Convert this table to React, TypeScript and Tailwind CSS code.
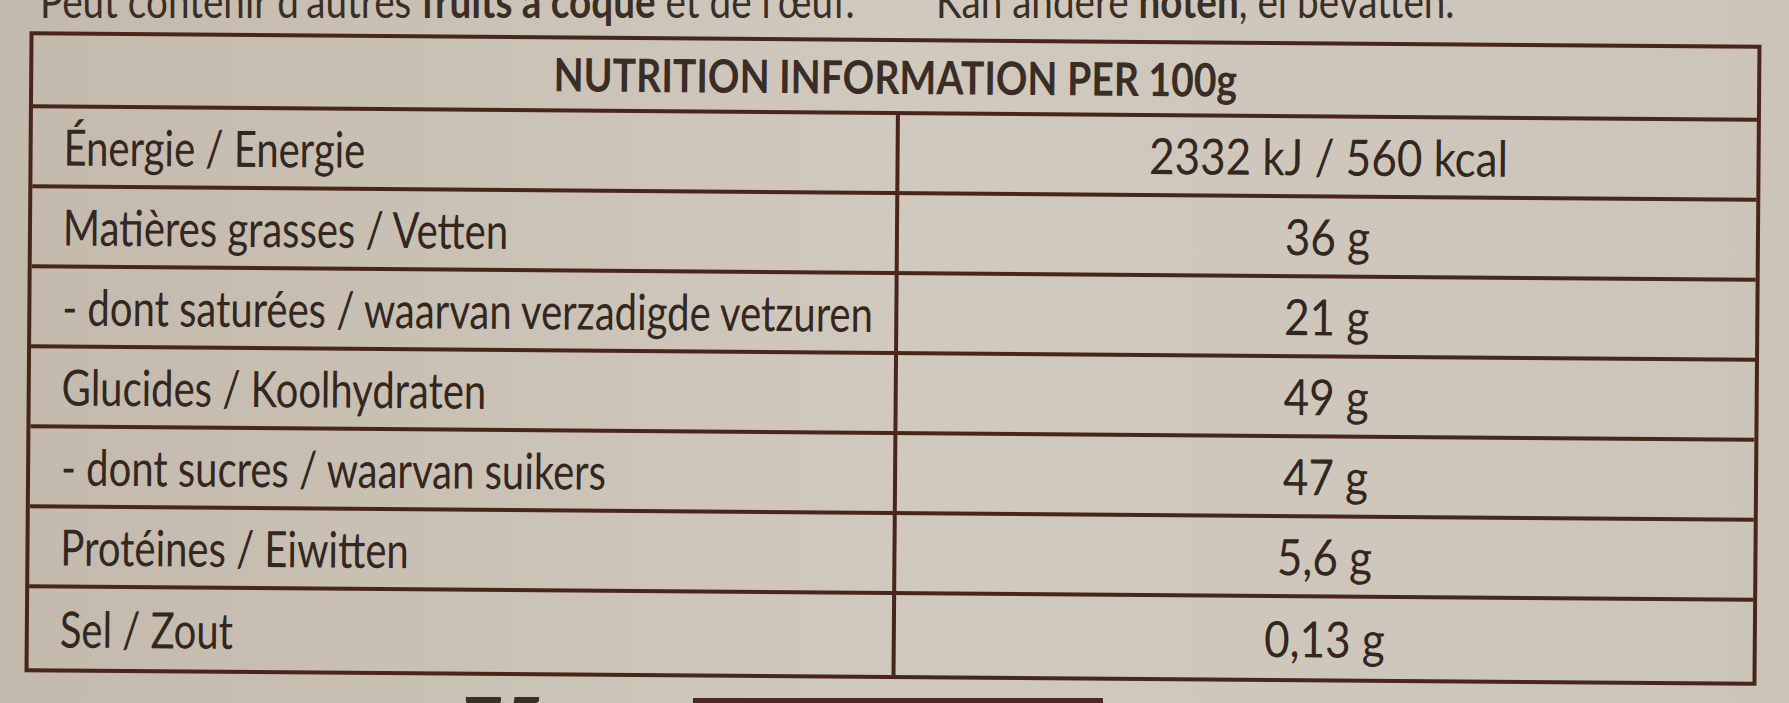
import React from 'react';

type Row = { label: string; value: string };

const rows: Row[] = [
  { label: 'Énergie / Energie', value: '2332 kJ / 560 kcal' },
  { label: 'Matières grasses / Vetten', value: '36 g' },
  { label: '- dont saturées / waarvan verzadigde vetzuren', value: '21 g' },
  { label: 'Glucides / Koolhydraten', value: '49 g' },
  { label: '- dont sucres / waarvan suikers', value: '47 g' },
  { label: 'Protéines / Eiwitten', value: '5,6 g' },
  { label: 'Sel / Zout', value: '0,13 g' },
];

export default function App() {
  return (
    <div className="w-[1789px] h-[703px] overflow-hidden bg-gradient-to-r from-[#c3b9ac] via-[#d1c9be] to-[#ccc4b9] text-[#33271f] font-['Lato','Liberation_Sans',sans-serif]">
      {/* allergen line, mostly cut off by the photo edge */}
      <div className="flex -mt-[21px] h-[44px] text-[46px] leading-[44px] whitespace-nowrap text-[#3a2e26]">
        <div className="w-[936px] pl-[40px]">
          <span className="inline-block origin-left scale-x-[0.84]">
            Peut contenir d'autres <b>fruits à coque</b> et de l'œuf.
          </span>
        </div>
        <div>
          <span className="inline-block origin-left scale-x-[0.84]">
            Kan andere <b>noten</b>, ei bevatten.
          </span>
        </div>
      </div>

      {/* nutrition table */}
      <div className="mt-[15px] ml-[27px] w-[1732px] border-4 border-[#4a2519] rotate-[0.45deg]">
        <div className="h-[73px] border-b-4 border-[#4a2519] flex items-center justify-center text-[46px] font-bold text-[#3a2d25]">
          <span className="inline-block scale-x-[0.85]">NUTRITION INFORMATION PER 100g</span>
        </div>
        {rows.map((row, i) => (
          <div
            key={row.label}
            className={`flex h-[80px] ${i < rows.length - 1 ? 'border-b-4 border-[#4a2519]' : ''}`}
          >
            <div className="w-[863px] pl-[31px] flex items-center text-[50px] leading-[76px] whitespace-nowrap">
              <span className="inline-block origin-left scale-x-[0.8]">{row.label}</span>
            </div>
            <div className="flex-1 border-l-4 border-[#4a2519] flex items-center justify-center text-[50px] leading-[76px] whitespace-nowrap">
              <span className="inline-block scale-x-[0.88]">{row.value}</span>
            </div>
          </div>
        ))}
      </div>

      {/* pack weight and colour band, cut by bottom edge */}
      <div className="mt-[6px] ml-[462px] flex items-start">
        <span className="w-[231px] text-[72px] leading-none text-[#3a2e26]">75 g</span>
        <div className="mt-[13px] w-[410px] h-[20px] bg-[#4a2a20]" />
      </div>
    </div>
  );
}
